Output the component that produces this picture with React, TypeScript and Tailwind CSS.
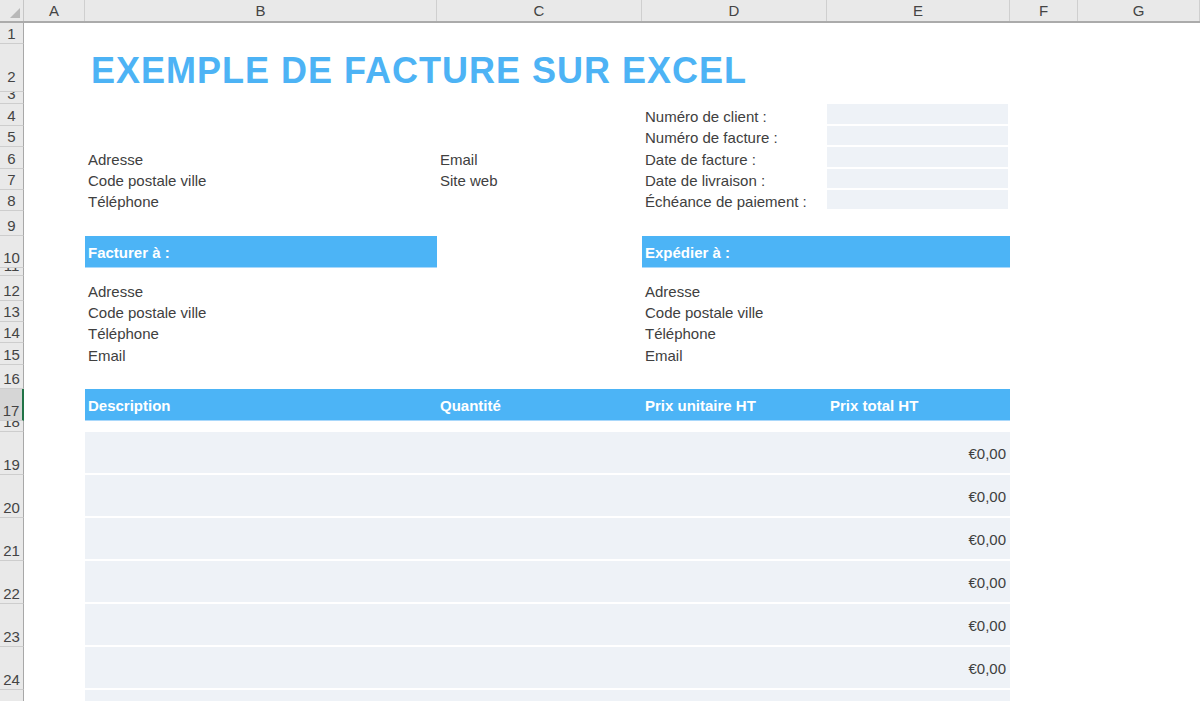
import React from 'react';

const COLS = 'grid grid-cols-[61px_352px_205px_185px_183px_68px_1fr] flex-1';

const RowLabel: React.FC<{ n: number; selected?: boolean; tall?: boolean }> = ({ n, selected, tall }) => (
  <div
    className={`w-[24px] shrink-0 flex items-end justify-center overflow-hidden border-b border-b-[#cdcdcd] ${
      selected ? 'bg-[#d6d6d6] border-r-2 border-r-[#217346]' : 'bg-[#e9e9e9] border-r border-r-[#a8a8a8]'
    }`}
  >
    <span className={`text-[15px] leading-none text-[#444] ${tall ? 'pb-[7px]' : 'pb-[2px]'}`}>{n}</span>
  </div>
);

const Row: React.FC<{ n: number; h: string; selected?: boolean; tall?: boolean; children?: React.ReactNode }> = ({
  n,
  h,
  selected,
  tall,
  children,
}) => (
  <div className={`flex ${h}`}>
    <RowLabel n={n} selected={selected} tall={tall} />
    <div className={COLS}>{children}</div>
  </div>
);

// plain cell text, bottom aligned like excel
const Text: React.FC<{ col: string; children: React.ReactNode }> = ({ col, children }) => (
  <div className={`${col} flex items-end px-[3px] pb-[1px] text-[15px] leading-[17px] text-[#404040] whitespace-nowrap`}>
    {children}
  </div>
);

const Fill: React.FC<{ col: string }> = ({ col }) => (
  <div className={`${col} bg-[#eef2f7] border-b-2 border-r-2 border-white`} />
);

const Bar: React.FC<{ col: string; children?: React.ReactNode }> = ({ col, children }) => (
  <div
    className={`${col} flex items-center px-[3px] pt-[3px] bg-[#4cb4f6] border-b border-b-[#a9d8fb] text-[15px] font-bold text-white whitespace-nowrap`}
  >
    {children}
  </div>
);

const Item: React.FC = () => (
  <div className="col-start-2 col-span-4 flex items-center justify-end pr-[4px] pt-[3px] bg-[#eef2f7] border-b-2 border-white text-[15px] text-[#404040]">
    €0,00
  </div>
);

const letters = ['A', 'B', 'C', 'D', 'E', 'F', 'G'];

export default function App() {
  return (
    <div className="h-[701px] w-[1200px] overflow-hidden bg-white font-['Liberation_Sans',Arial,sans-serif]">
      {/* column header */}
      <div className="flex h-[23px] bg-[#e9e9e9] border-b-2 border-[#ababab]">
        <div className="w-[24px] shrink-0 relative border-r border-[#c6c6c6]">
          <svg className="absolute right-[3px] bottom-[3px]" width="10" height="10" viewBox="0 0 10 10">
            <polygon points="10,0 10,10 0,10" fill="#b8b8b8" />
          </svg>
        </div>
        <div className={COLS}>
          {letters.map((l) => (
            <div key={l} className="flex items-center justify-center border-r border-[#cfcfcf] text-[15px] text-[#444] leading-none">
              {l}
            </div>
          ))}
        </div>
      </div>

      <Row n={1} h="h-[21px]" />
      <Row n={2} h="h-[48px]" tall>
        <div className="col-start-2 col-span-4 flex items-center pl-[6px] pt-[6px] text-[36px] tracking-[1px] font-bold text-[#4db3f5] whitespace-nowrap leading-none">
          EXEMPLE DE FACTURE SUR EXCEL
        </div>
      </Row>
      <Row n={3} h="h-[12px]" />
      <Row n={4} h="h-[22px]">
        <Text col="col-start-4">Numéro de client :</Text>
        <Fill col="col-start-5" />
      </Row>
      <Row n={5} h="h-[21px]">
        <Text col="col-start-4">Numéro de facture :</Text>
        <Fill col="col-start-5" />
      </Row>
      <Row n={6} h="h-[22px]">
        <Text col="col-start-2">Adresse</Text>
        <Text col="col-start-3">Email</Text>
        <Text col="col-start-4">Date de facture :</Text>
        <Fill col="col-start-5" />
      </Row>
      <Row n={7} h="h-[21px]">
        <Text col="col-start-2">Code postale ville</Text>
        <Text col="col-start-3">Site web</Text>
        <Text col="col-start-4">Date de livraison :</Text>
        <Fill col="col-start-5" />
      </Row>
      <Row n={8} h="h-[21px]">
        <Text col="col-start-2">Téléphone</Text>
        <Text col="col-start-4">Échéance de paiement :</Text>
        <Fill col="col-start-5" />
      </Row>
      <Row n={9} h="h-[25px]" />
      <Row n={10} h="h-[32px]">
        <Bar col="col-start-2">Facturer à :</Bar>
        <Bar col="col-start-4 col-span-2">Expédier à :</Bar>
      </Row>
      <Row n={11} h="h-[8px]" />
      <Row n={12} h="h-[25px]">
        <Text col="col-start-2">Adresse</Text>
        <Text col="col-start-4">Adresse</Text>
      </Row>
      <Row n={13} h="h-[21px]">
        <Text col="col-start-2">Code postale ville</Text>
        <Text col="col-start-4">Code postale ville</Text>
      </Row>
      <Row n={14} h="h-[21px]">
        <Text col="col-start-2">Téléphone</Text>
        <Text col="col-start-4">Téléphone</Text>
      </Row>
      <Row n={15} h="h-[22px]">
        <Text col="col-start-2">Email</Text>
        <Text col="col-start-4">Email</Text>
      </Row>
      <Row n={16} h="h-[24px]" />
      <Row n={17} h="h-[32px]" selected>
        <Bar col="col-start-2">Description</Bar>
        <Bar col="col-start-3">Quantité</Bar>
        <Bar col="col-start-4">Prix unitaire HT</Bar>
        <Bar col="col-start-5">Prix total HT</Bar>
      </Row>
      <Row n={18} h="h-[11px]" />
      {[19, 20, 21, 22, 23, 24].map((n) => (
        <Row key={n} n={n} h="h-[43px]">
          <Item />
        </Row>
      ))}
      <Row n={25} h="h-[43px]">
        <div className="col-start-2 col-span-4 bg-[#eef2f7] border-b-2 border-white" />
      </Row>
    </div>
  );
}
